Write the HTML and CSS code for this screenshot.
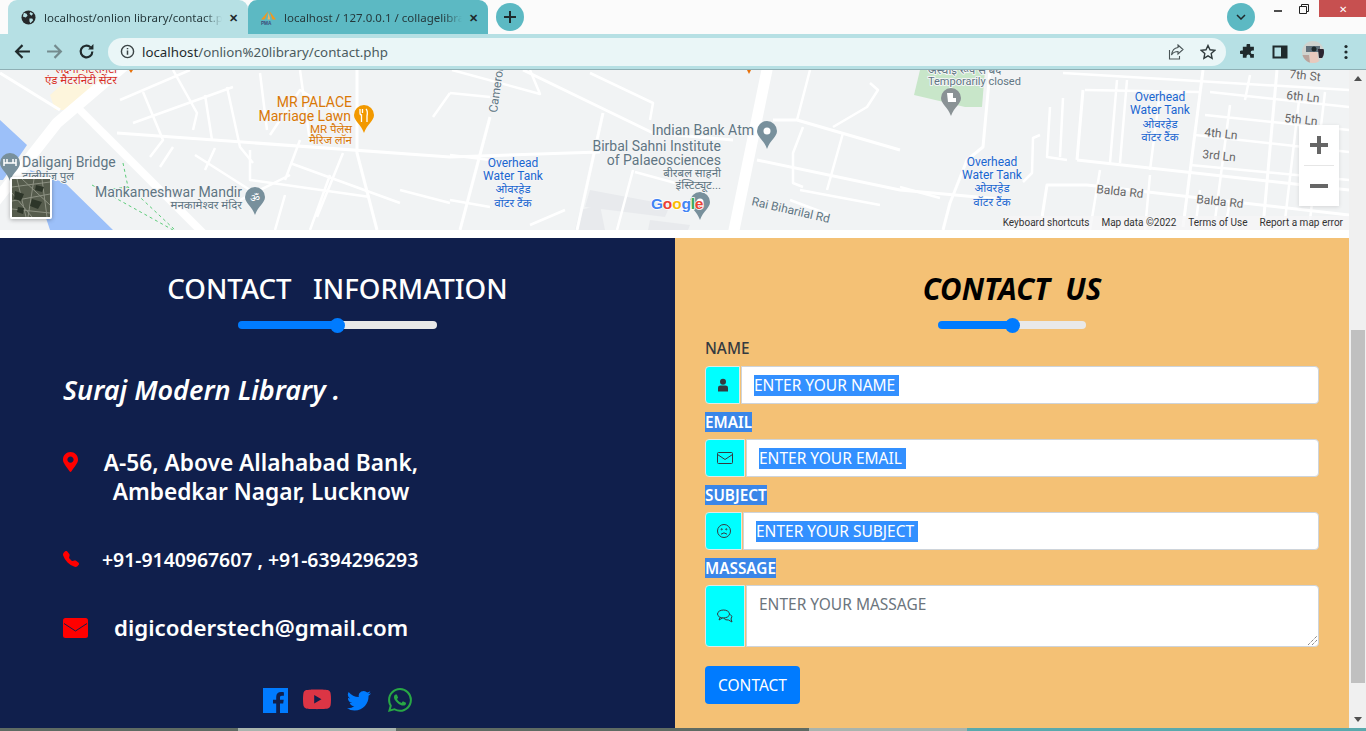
FILE: index.html
```html
<!DOCTYPE html>
<html lang="en">
<head>
<meta charset="utf-8">
<title>Contact</title>
<link rel="stylesheet" href="styles.css">
</head>
<body>
<header class="chrome">
  <div class="tabstrip">
    <div class="tab tab-active">
      <svg class="favicon" viewBox="0 0 16 16"><circle cx="8" cy="8" r="7.500" fill="#26292b"/><path d="M3 3l3 1 1 2-2 2-3-1zM9 9l3 0 1 2-3 3-1-2zM10 2l3 2-2 2-2-2z" fill="#b6e0e4"/></svg>
      <span class="tab-title">localhost/onlion library/contact.php</span>
      <span class="tab-x">✕</span>
    </div>
    <div class="tab tab-other">
      <svg class="favicon" viewBox="0 0 18 16"><path d="M9 1L5 10H1zM10 1l3 9h4z" fill="#f0981e"/><path d="M9 3l-1 7h3z" fill="#f7b45a"/><text x="1" y="15.500" class="pma">PMA</text></svg>
      <span class="tab-title">localhost / 127.0.0.1 / collagelibrary</span>
      <span class="tab-x">✕</span>
    </div>
    <div class="newtab"><svg viewBox="0 0 12 12"><path d="M6 0v12M0 6h12" stroke="#1f2a2c" stroke-width="2"/></svg></div>
    <div class="strip-fill"></div>
    <div class="tabsearch"><svg viewBox="0 0 10 6"><path d="M1 1l4 4 4-4" fill="none" stroke="#1f2a2c" stroke-width="1.500"/></svg></div>
    <div class="winctl">
      <span class="win-btn"><svg viewBox="0 0 10 10" width="10" height="10"><path d="M1 7h8" stroke="#222" stroke-width="1.600"/></svg></span>
      <span class="win-btn win-restore"><svg viewBox="0 0 10 10" width="10" height="10"><path d="M2.500 2.500V.5h7v7h-2M.5 2.500h7v7h-7z" fill="none" stroke="#222"/></svg></span>
      <span class="win-btn win-close">✕</span>
    </div>
  </div>
  <div class="toolbar">
    <svg class="tool" viewBox="0 0 16 16"><path d="M15 8H2M8 2L2 8l6 6" fill="none" stroke="#1f2a2c" stroke-width="2"/></svg>
    <svg class="tool" viewBox="0 0 16 16"><path d="M1 8h13M8 2l6 6-6 6" fill="none" stroke="#748b8e" stroke-width="2"/></svg>
    <svg class="tool tool-last" viewBox="0 0 16 16"><path d="M13.500 8a5.500 5.500 0 1 1-1.700-4" fill="none" stroke="#1f2a2c" stroke-width="2"/><path d="M14.500 1v5h-5z" fill="#1f2a2c"/></svg>
    <div class="omnibox">
      <svg class="info" viewBox="0 0 16 16"><circle cx="8" cy="8" r="6.500" fill="none" stroke="#3b4446" stroke-width="1.500"/><path d="M8 7v4.500M8 4.200v1.500" stroke="#3b4446" stroke-width="1.600"/></svg>
      <span class="url"><b>localhost</b>/onlion%20library/contact.php</span>
      <svg class="omni-icon" viewBox="0 0 16 16"><path d="M10 1l5 4.500-5 4.500V7.500C7 7.500 5 8.500 3.500 11 4 7 6 4 10 3.500zM1.500 6v9h10v-3" fill="none" stroke="#4a5557" stroke-width="1.100"/></svg>
      <svg class="omni-icon" viewBox="0 0 16 16"><path d="M8 1.500l2 4.300 4.700.6-3.500 3.200.9 4.700L8 11.900l-4.100 2.400.9-4.700L1.300 6.400 6 5.800z" fill="none" stroke="#2f3a3c" stroke-width="1.400"/></svg>
    </div>
    <svg class="ext" viewBox="0 0 16 16"><path d="M6 1.500a2 2 0 0 1 4 0V3h4v4h-1.500a2 2 0 0 0 0 4H14v4h-4v-1.500a2 2 0 0 0-4 0V15H2v-4H.5a2 2 0 0 1 0-4H2V3h4z" fill="#1f2a2c" transform="translate(1 0) scale(.92)"/></svg>
    <svg class="ext ext-panel" viewBox="0 0 16 16"><path d="M1.500 2.500h13v11h-13z" fill="none" stroke="#1f2a2c" stroke-width="2"/><path d="M9 2.500h5v11H9z" fill="#1f2a2c"/></svg>
    <svg class="avatar" viewBox="0 0 22 22"><rect width="22" height="22" fill="#cfd3cf"/><path d="M4 5h14v6H4z" fill="#5f6f7a"/><path d="M8 11h7l2 11H7z" fill="#e8c9bd"/><path d="M16 8h6v9h-5z" fill="#2a2530"/><path d="M0 14h7l1 8H3z" fill="#b8a39c"/><circle cx="12" cy="8" r="2.500" fill="#1f2a2c"/></svg>
    <svg class="dots" viewBox="0 0 4 16"><circle cx="2" cy="2.500" r="1.600"/><circle cx="2" cy="8" r="1.600"/><circle cx="2" cy="13.500" r="1.600"/></svg>
  </div>
</header>

<div class="viewport">
  <main class="page">
    <section class="map">
      <svg class="map-art" viewBox="0 0 1349 160" width="1349" height="160">
        <path class="water" d="M0 50L27 75 3 110H0zM30 100L65 113 113 160H50z"/>
        <path class="beige" d="M50 25L78 0H125L80 40 55 40z"/>
        <path class="park" d="M914 25L920 0H985L982 37 965 37z"/>
        <path class="bldg" d="M590 120L670 135 665 147 585 137zM580 140L600 135 605 160H575zM650 150L690 155 688 160H648z"/>
        <g class="r-big">
          <path d="M-5 132L57 53 125-5"/>
          <path d="M768-5L733 165"/>
          <path class="r-wide" d="M77 37L205 165"/>
        </g>
        <g class="r-mid">
          <path d="M0 3L60 40"/>
          <path d="M117 63L450 87 600 82"/>
          <path d="M523 0L653 63 733 70"/>
          <path d="M603 43L577 160"/>
          <path d="M490 47L460 160"/>
          <path d="M773 50L797 50 900 80"/>
          <path d="M757 90L900 120 1010 130"/>
          <path d="M990 0L983 77 967 90 950 133 943 160"/>
          <path d="M1077 90L1349 120"/>
          <path d="M1040 160L1047 115 1087 115 1349 145"/>
          <path d="M1203 0L1183 157"/>
          <path d="M1277 0L1263 157"/>
          <path d="M1083 20L1077 90"/>
          <path d="M357 0L357 83 370 133 377 160"/>
        </g>
        <g class="r-sm">
          <path d="M143 22L163 70 150 87M173 0L197 43 193 60M227 17L240 77 253 93M133 53L233 17M260 3L267 60M120 30L190 0M205 25L212 70M300 0L310 72"/>
          <path d="M173 77L160 97M195 85L250 120M250 80L250 110 370 127M215 78L205 100M290 93L400 133M343 83L317 147M400 120L450 133M450 23L433 47M240 130L290 105M270 65L300 20 350 50M285 125L275 160M330 105L310 160M300 70L285 110"/>
          <path d="M450 23L490 27M450 85L490 90M450 130L490 137M530 155L565 140M452 0L540 24 530 0M590 3L653 33 650 50"/>
          <path d="M633 100L617 160M635 102L690 117M810 0L797 50M833 57L867 37 878 20 870 13M803 57L793 83 793 113 803 117M843 63L827 120M800 120L880 135M790 130L830 145"/>
          <path d="M1040 65L1033 68 1032 103 1023 112M1063 28L1060 87M1050 37L1047 87 1067 90M900 117L940 128"/>
          <path d="M1063 3L1349 20M1085 20L1200 22M1117 10L1110 93M1127 10L1120 93M1160 22L1150 100M1210 22L1349 37M1205 45L1349 60M1195 65L1349 82M1190 95L1349 110M1230 35L1215 150M1300 22L1285 150M1325 22L1310 150M1250 5L1245 30"/>
          <path d="M1100 100L1090 160M1150 105L1145 160M1200 120L1195 160M1230 130L1225 160"/>
        </g>
        <g class="trail"><path d="M92 115L173 160M123 93L128 117 143 130 175 160M128 117L105 120"/></g>

        <g class="pin pin-grey" transform="translate(10 100)"><path d="M0 -17a10 10 0 0 1 10 10c0 6-7 9-10 18-3-9-10-12-10-18a10 10 0 0 1 10-10z"/><path d="M-6-11v7M6-11v7M-6-7h12M-3-11v4M3-11v4" stroke="#fff" stroke-width="1.500"/></g>
        <g class="pin pin-grey" transform="translate(255 134)"><path d="M0 -17a10 10 0 0 1 10 10c0 6-7 9-10 18-3-9-10-12-10-18a10 10 0 0 1 10-10z"/><text x="0" y="-2" class="glyph">ॐ</text></g>
        <g class="pin pin-grey" transform="translate(767 66)"><path d="M0 -15a10 10 0 0 1 10 10c0 6-7 9-10 18-3-9-10-12-10-18a10 10 0 0 1 10-10z"/><circle cy="-5" r="3.500" fill="#fff"/></g>
        <g class="pin pin-grey" transform="translate(700 135)"><path d="M0 -13a10 10 0 0 1 10 10c0 6-7 9-10 18-3-9-10-12-10-18a10 10 0 0 1 10-10z"/><circle cy="-3" r="3.500" fill="#fff"/></g>
        <g class="pin pin-dgrey" transform="translate(951 29)"><path d="M0 -11a10 10 0 0 1 10 10c0 6-7 9-10 18-3-9-10-12-10-18a10 10 0 0 1 10-10z"/><path d="M-4-6h6v5h3v4h-8z" fill="#fff"/></g>
        <g class="pin pin-orange" transform="translate(364 47)"><path d="M0 -12a10 10 0 0 1 10 10c0 6-7 9-10 18-3-9-10-12-10-18a10 10 0 0 1 10-10z"/><path d="M-4-8v4q0 2 1.500 2v7M-1.500-8v4M2-8q2 2 1 7v6" stroke="#fff" stroke-width="1.300" fill="none"/></g>
        <path class="marker" d="M129 0l2 3 2-3zM747 0l2 4 2-4z"/>

        <text class="lb lb-r xs" x="117" y="3" text-anchor="end">लक्ष्मी मेटरनिटी</text>
        <text class="lb lb-r xs" x="117" y="14" text-anchor="end">एंड मैटरनिटी सेंटर</text>
        <text class="lb lb-o md" x="352" y="37" text-anchor="end">MR PALACE</text>
        <text class="lb lb-o md" x="351" y="51" text-anchor="end">Marriage Lawn</text>
        <text class="lb lb-o xs" x="352" y="63" text-anchor="end">MR पैलेस</text>
        <text class="lb lb-o xs" x="352" y="74" text-anchor="end">मैरिज लॉन</text>
        <text class="lb lb-g md" x="22" y="97">Daliganj Bridge</text>
        <text class="lb lb-g xs" x="22" y="110">डालीगंज पुल</text>
        <text class="lb lb-g lg" x="242" y="127" text-anchor="end">Mankameshwar Mandir</text>
        <text class="lb lb-g xs" x="242" y="139" text-anchor="end">मनकामेश्वर मंदिर</text>
        <text class="lb lb-g sm" x="497" y="43" transform="rotate(-82 497 43)">Cameron</text>
        <text class="lb lb-g md" x="754" y="65" text-anchor="end">Indian Bank Atm</text>
        <text class="lb lb-g md" x="721" y="81" text-anchor="end">Birbal Sahni Institute</text>
        <text class="lb lb-g md" x="721" y="95" text-anchor="end">of Palaeosciences</text>
        <text class="lb lb-g xs" x="721" y="107" text-anchor="end">बीरबल साहनी</text>
        <text class="lb lb-g xs" x="721" y="119" text-anchor="end">इंस्टिट्यूट...</text>
        <text class="lb lb-b sm" x="513" y="97" text-anchor="middle">Overhead</text>
        <text class="lb lb-b sm" x="513" y="110" text-anchor="middle">Water Tank</text>
        <text class="lb lb-b xs" x="513" y="123" text-anchor="middle">ओवरहेड</text>
        <text class="lb lb-b xs" x="513" y="137" text-anchor="middle">वॉटर टैंक</text>
        <text class="lb lb-b sm" x="992" y="96" text-anchor="middle">Overhead</text>
        <text class="lb lb-b sm" x="992" y="109" text-anchor="middle">Water Tank</text>
        <text class="lb lb-b xs" x="992" y="122" text-anchor="middle">ओवरहेड</text>
        <text class="lb lb-b xs" x="992" y="136" text-anchor="middle">वॉटर टैंक</text>
        <text class="lb lb-b sm" x="1160" y="31" text-anchor="middle">Overhead</text>
        <text class="lb lb-b sm" x="1160" y="44" text-anchor="middle">Water Tank</text>
        <text class="lb lb-b xs" x="1160" y="58" text-anchor="middle">ओवरहेड</text>
        <text class="lb lb-b xs" x="1160" y="71" text-anchor="middle">वॉटर टैंक</text>
        <text class="lb lb-g xs" x="928" y="4">अस्थाई रूप से बंद</text>
        <text class="lb lb-g tc" x="928" y="15">Temporarily closed</text>
        <text class="lb lb-g sm" x="751" y="135" transform="rotate(13 751 135)">Rai Biharilal Rd</text>
        <text class="lb lb-d sm" x="1289" y="8" transform="rotate(6 1289 8)">7th St</text>
        <text class="lb lb-d sm" x="1286" y="29" transform="rotate(6 1286 29)">6th Ln</text>
        <text class="lb lb-d sm" x="1284" y="52" transform="rotate(6 1284 52)">5th Ln</text>
        <text class="lb lb-d sm" x="1204" y="66" transform="rotate(6 1204 66)">4th Ln</text>
        <text class="lb lb-d sm" x="1202" y="88" transform="rotate(6 1202 88)">3rd Ln</text>
        <text class="lb lb-d sm" x="1096" y="123" transform="rotate(6 1096 123)">Balda Rd</text>
        <text class="lb lb-d sm" x="1196" y="133" transform="rotate(6 1196 133)">Balda Rd</text>
        <text class="logo" x="651" y="139"><tspan fill="#4285f4">G</tspan><tspan fill="#ea4335">o</tspan><tspan fill="#fbbc05">o</tspan><tspan fill="#4285f4">g</tspan><tspan fill="#34a853">l</tspan><tspan fill="#ea4335">e</tspan></text>
      </svg>
      <div class="sat">
        <svg viewBox="0 0 38 38" width="38" height="38"><rect width="38" height="38" fill="#565c4d"/><path d="M0 8L38 3M5 0L14 38M22 0L16 38M0 22L38 15M0 30L38 34M30 0L35 38M0 14L20 38M10 0L38 26" stroke="#8d9183" stroke-width="1"/><path d="M3 12l9 3-3 7-7-2zM20 20l10 3-4 7-8-3zM24 6l8 2-2 5-7-2zM6 28l6 1-1 6-6-2z" fill="#2d3529"/></svg>
      </div>
      <div class="zoom">
        <button class="zoom-btn" type="button"><svg viewBox="0 0 18 18" width="18" height="18"><path d="M9 0v18M0 9h18" stroke="#666" stroke-width="4"/></svg></button>
        <span class="zoom-sep"></span>
        <button class="zoom-btn" type="button"><svg viewBox="0 0 18 18" width="18" height="18"><path d="M0 9h18" stroke="#666" stroke-width="4"/></svg></button>
      </div>
      <div class="attrib">
        <span>Keyboard shortcuts</span><span>Map data ©2022</span><span>Terms of Use</span><span>Report a map error</span>
      </div>
    </section>

    <section class="contact">
      <div class="info-col">
        <h2 class="col-title">CONTACT &nbsp; INFORMATION</h2>
        <input class="range range-l" type="range" value="50" aria-label="range">
        <h3 class="org">Suraj Modern Library .</h3>
        <div class="line line-addr">
          <svg class="ico-pin" viewBox="0 0 384 512"><path d="M172.268 501.67C26.97 291.031 0 269.413 0 192 0 85.961 85.961 0 192 0s192 85.961 192 192c0 77.413-26.97 99.031-172.268 309.67-9.535 13.774-29.93 13.773-39.464 0zM192 272c44.183 0 80-35.817 80-80s-35.817-80-80-80-80 35.817-80 80 35.817 80 80 80z"/></svg>
          <p class="addr">A-56, Above Allahabad Bank,<br>Ambedkar Nagar, Lucknow</p>
        </div>
        <div class="line line-phone">
          <svg class="ico-phone" viewBox="0 0 16 16"><path d="M1.885.511a1.745 1.745 0 0 1 2.61.163L6.29 2.98c.329.423.445.974.315 1.494l-.547 2.19a.678.678 0 0 0 .178.643l2.457 2.457a.678.678 0 0 0 .644.178l2.189-.547a1.745 1.745 0 0 1 1.494.315l2.306 1.794c.829.645.905 1.87.163 2.611l-1.034 1.034c-.74.74-1.846 1.065-2.877.702a18.634 18.634 0 0 1-7.01-4.42 18.634 18.634 0 0 1-4.42-7.009c-.362-1.03-.037-2.137.703-2.877L1.885.511z"/></svg>
          <p class="phone">+91-9140967607 , +91-6394296293</p>
        </div>
        <div class="line line-mail">
          <svg class="ico-mail" viewBox="0 0 25 20"><rect width="25" height="20" rx="2.500"/><path d="M1 5.500L12.500 13 24 5.500" fill="none" stroke="#101f4c" stroke-width="1"/></svg>
          <p class="mail">digicoderstech@gmail.com</p>
        </div>
        <div class="socials">
          <svg class="soc soc-fb" viewBox="0 0 25 25"><rect width="25" height="25" fill="#007bff"/><path d="M17 25v-9.500h3.200l.5-3.700H17V9.500c0-1.100.4-1.800 1.900-1.800h2V4.300c-.4 0-1.500-.2-2.900-.2-2.900 0-4.800 1.700-4.800 5v2.700H10v3.700h3.200V25z" fill="#101f4c"/></svg>
          <svg class="soc soc-yt" viewBox="0 0 16 16"><path d="M8.051 1.999h.089c.822.003 4.987.033 6.11.335a2.01 2.01 0 0 1 1.415 1.42c.101.38.172.883.22 1.402l.01.104.022.26.008.104c.065.914.073 1.77.074 1.957v.075c-.001.194-.01 1.108-.082 2.06l-.008.105-.009.104c-.05.572-.124 1.14-.235 1.558a2.007 2.007 0 0 1-1.415 1.42c-1.16.312-5.569.334-6.18.335h-.142c-.309 0-1.587-.006-2.927-.052l-.17-.006-.087-.004-.171-.007-.171-.007c-1.11-.049-2.167-.128-2.654-.26a2.007 2.007 0 0 1-1.415-1.419c-.111-.417-.185-.986-.235-1.558L.09 9.82l-.008-.104A31.4 31.4 0 0 1 0 7.68v-.123c.002-.215.01-.958.064-1.778l.007-.103.003-.052.008-.104.022-.26.01-.104c.048-.519.119-1.023.22-1.402a2.007 2.007 0 0 1 1.415-1.42c.487-.13 1.544-.21 2.654-.26l.17-.007.172-.006.086-.003.171-.007A99.788 99.788 0 0 1 7.858 2h.193zM6.4 5.209v4.818l4.157-2.408L6.4 5.209z"/></svg>
          <svg class="soc soc-tw" viewBox="0 0 16 16"><path d="M5.026 15c6.038 0 9.341-5.003 9.341-9.334 0-.14 0-.282-.006-.422A6.685 6.685 0 0 0 16 3.542a6.658 6.658 0 0 1-1.889.518 3.301 3.301 0 0 0 1.447-1.817 6.533 6.533 0 0 1-2.087.793A3.286 3.286 0 0 0 7.875 6.03a9.325 9.325 0 0 1-6.767-3.429 3.289 3.289 0 0 0 1.018 4.382A3.323 3.323 0 0 1 .64 6.575v.045a3.288 3.288 0 0 0 2.632 3.218 3.203 3.203 0 0 1-.865.115 3.23 3.23 0 0 1-.614-.057 3.283 3.283 0 0 0 3.067 2.277A6.588 6.588 0 0 1 .78 13.58a6.32 6.32 0 0 1-.78-.045A9.344 9.344 0 0 0 5.026 15z"/></svg>
          <svg class="soc soc-wa" viewBox="0 0 16 16"><path d="M13.601 2.326A7.854 7.854 0 0 0 7.994 0C3.627 0 .068 3.558.064 7.926c0 1.399.366 2.76 1.057 3.965L0 16l4.204-1.102a7.933 7.933 0 0 0 3.79.965h.004c4.368 0 7.926-3.558 7.93-7.93A7.898 7.898 0 0 0 13.6 2.326zM7.994 14.521a6.573 6.573 0 0 1-3.356-.92l-.24-.144-2.494.654.666-2.433-.156-.251a6.56 6.56 0 0 1-1.007-3.505c0-3.626 2.957-6.584 6.591-6.584a6.56 6.56 0 0 1 4.66 1.931 6.557 6.557 0 0 1 1.928 4.66c-.004 3.639-2.961 6.592-6.592 6.592zm3.615-4.934c-.197-.099-1.17-.578-1.353-.646-.182-.065-.315-.099-.445.099-.133.197-.513.646-.627.775-.114.133-.232.148-.43.05-.197-.1-.836-.308-1.592-.985-.59-.525-.985-1.175-1.103-1.372-.114-.198-.011-.304.088-.403.087-.088.197-.232.296-.346.1-.114.133-.198.198-.33.065-.134.034-.248-.015-.347-.05-.099-.445-1.076-.612-1.47-.16-.389-.323-.335-.445-.34-.114-.007-.247-.007-.38-.007a.729.729 0 0 0-.529.247c-.182.198-.691.677-.691 1.654 0 .977.71 1.916.81 2.049.098.133 1.394 2.132 3.383 2.992.47.205.84.326 1.129.418.475.152.904.129 1.246.08.38-.058 1.171-.48 1.338-.943.164-.464.164-.86.114-.943-.049-.084-.182-.133-.38-.232z"/></svg>
        </div>
      </div>

      <form class="form-col">
        <h2 class="form-title">CONTACT &nbsp;US</h2>
        <input class="range range-r" type="range" value="50" aria-label="range">
        <div class="label label-plain">NAME</div>
        <div class="group">
          <span class="addon addon-name"><svg class="ai" viewBox="0 0 14 14"><circle cx="7" cy="3.800" r="3"/><path d="M2 13.500V9.500Q2 7.500 4.500 7.500h5Q12 7.500 12 9.500v4z"/></svg></span>
          <div class="field"><span class="sel">ENTER YOUR NAME </span></div>
        </div>
        <div class="label"><span class="hl">EMAIL</span></div>
        <div class="group">
          <span class="addon addon-email"><svg class="ai ai-line" viewBox="0 0 16 14"><rect x=".5" y="1.500" width="15" height="11" rx="1"/><path d="M.5 3.500L8 8.500l7.500-5"/></svg></span>
          <div class="field"><span class="sel">ENTER YOUR EMAIL </span></div>
        </div>
        <div class="label"><span class="hl">SUBJECT</span></div>
        <div class="group">
          <span class="addon addon-subject"><svg class="ai ai-line" viewBox="0 0 14 14"><circle cx="7" cy="7" r="6.500"/><circle cx="4.700" cy="5.300" r=".6"/><circle cx="9.300" cy="5.300" r=".6"/><path d="M4 10.200Q7 7.500 10 10.200"/></svg></span>
          <div class="field"><span class="sel">ENTER YOUR SUBJECT </span></div>
        </div>
        <div class="label"><span class="hl">MASSAGE</span></div>
        <div class="group group-area">
          <span class="addon addon-email"><svg class="ai ai-line" viewBox="0 0 16 14"><ellipse cx="6.500" cy="5" rx="6" ry="4"/><path d="M3 8.500L2 11l3.500-2M13.500 5.500Q16 7.500 14 10l1 3-3.500-2Q8.500 11.500 6.500 9"/></svg></span>
          <div class="field field-area"><span class="ph">ENTER YOUR MASSAGE</span>
            <svg class="grip" viewBox="0 0 9 9" width="9" height="9"><path d="M0 9L9 0M4 9L9 4" stroke="#555" stroke-dasharray="1 1"/></svg>
          </div>
        </div>
        <button class="btn" type="button">CONTACT</button>
      </form>
    </section>
  </main>
  <aside class="scrollbar">
    <span class="sb-arrow"><svg viewBox="0 0 8 5" width="8" height="5"><path d="M4 0l4 5H0z" fill="#505050"/></svg></span>
    <div class="sb-track"><div class="sb-thumb"></div></div>
    <span class="sb-arrow"><svg viewBox="0 0 8 5" width="8" height="5"><path d="M0 0h8L4 5z" fill="#505050"/></svg></span>
  </aside>
</div>
<footer class="taskbar">
  <span class="tb tb-a"></span><span class="tb tb-b"></span><span class="tb tb-a2"></span><span class="tb tb-b"></span><span class="tb tb-c"></span>
</footer>
</body>
</html>
```

FILE: styles.css
```css
* { box-sizing: border-box; }
html, body { margin: 0; height: 100%; overflow: hidden; }
body { width: 1366px; height: 731px; display: flex; flex-direction: column; font-family: "Noto Sans", "Open Sans", "Noto Sans CJK SC", sans-serif; background: #fff; }
p, h2, h3 { margin: 0; }

/* browser chrome */
.chrome { flex: none; height: 70px; display: flex; flex-direction: column; border-bottom: 1px solid #8fb0b5; }
.tabstrip { height: 34px; background: #fbfbfb; display: flex; align-items: flex-end; padding-left: 8px; }
.tab { width: 240px; height: 34px; border-radius: 9px 9px 0 0; display: flex; align-items: center; padding: 0 10px 0 12px; gap: 7px; font-size: 11.500px; color: #25393c; }
.tab-active { background: #b6e0e4; }
.tab-other { background: #5cb9c3; }
.favicon { width: 17px; height: 15px; flex: none; }
.pma { font: bold 5px "Liberation Sans", sans-serif; fill: #3a4a78; }
.tab-title { flex: 1; white-space: nowrap; overflow: hidden; -webkit-mask-image: linear-gradient(90deg, #000 90%, transparent); mask-image: linear-gradient(90deg, #000 90%, transparent); }
.tab-x { font-size: 11px; font-weight: 700; color: #1f2a2c; }
.newtab { width: 28px; height: 28px; margin: 0 0 3px 8px; border-radius: 50%; background: #5cb9c3; display: flex; align-items: center; justify-content: center; }
.newtab svg { width: 12px; height: 12px; }
.strip-fill { flex: 1; }
.tabsearch { width: 28px; height: 28px; margin: 0 10px 3px 0; border-radius: 50%; background: #5cb9c3; display: flex; align-items: center; justify-content: center; }
.tabsearch svg { width: 10px; height: 6px; }
.winctl { display: flex; align-self: flex-start; }
.win-btn { width: 26px; height: 16px; display: flex; align-items: center; justify-content: center; margin-top: 1px; }
.win-restore { margin-right: 2px; }
.win-btn.win-close { width: 47px; height: 17px; margin-top: 0; background: #c75050; color: #fff; font-size: 10px; }
.toolbar { flex: 1; background: #b6e0e4; display: flex; align-items: center; padding: 0 13px 0 14px; }
.tool { width: 17px; height: 17px; margin-right: 15px; flex: none; }
.tool-last { margin-right: 13px; }
.omnibox { width: 1118px; height: 28px; border-radius: 14px; background: #eaf6f7; display: flex; align-items: center; padding: 0 10px 0 12px; flex: none; }
.info { width: 15px; height: 15px; margin-right: 7px; }
.url { flex: 1; font-size: 13.300px; color: #4b5b5e; }
.url b { font-weight: 400; color: #1e2a2c; }
.omni-icon { width: 16px; height: 16px; margin-left: 16px; }
.ext { width: 16px; height: 16px; margin-left: 14px; flex: none; }
.ext-panel { margin-left: 16px; }
.avatar { width: 22px; height: 22px; margin-left: 14px; flex: none; border-radius: 50%; }
.dots { width: 4px; height: 16px; margin-left: 20px; fill: #1f2a2c; flex: none; }

/* page */
.viewport { flex: 1; min-height: 0; display: flex; }
.page { width: 1349px; display: flex; flex-direction: column; background: #fff; }
.map { height: 160px; margin-bottom: 8px; position: relative; overflow: hidden; background: #f1f3f4; flex: none; }
.map-art { display: block; }
.water { fill: #9cc0f9; }
.beige { fill: #fdf5dc; }
.park { fill: #c8e6c9; }
.bldg { fill: #e8eaed; }
.r-big path, .r-mid path, .r-sm path { fill: none; stroke: #fff; stroke-linejoin: round; }
.r-big path { stroke-width: 11; }
.r-big .r-wide { stroke-width: 8; }
.r-mid path { stroke-width: 3; }
.r-sm path { stroke-width: 2.500; }
.trail path { fill: none; stroke: #5dcc7a; stroke-width: 1; stroke-dasharray: 3 3; }
.pin-grey path:first-child { fill: #78909c; }
.pin-dgrey path:first-child { fill: #8a9295; }
.pin-orange path:first-child { fill: #f29900; }
.glyph { font: 11px "Noto Sans", sans-serif; fill: #fff; text-anchor: middle; }
.marker { fill: #e8710a; }
.lb { font-family: Roboto, "Noto Sans", sans-serif; paint-order: stroke; stroke: #f4f5f6; stroke-width: 2px; stroke-linejoin: round; }
.lg { font-size: 14px; }
.md { font-size: 14px; }
.sm { font-size: 12px; }
.tc { font-size: 11px; }
.xs { font-size: 11.500px; }
.lb-r { fill: #d93025; }
.lb-o { fill: #d97806; }
.lb-g { fill: #5f7583; }
.lb-b { fill: #1a66d0; }
.lb-d { fill: #666; }
.logo { font: 700 15.500px "Liberation Sans", sans-serif; letter-spacing: -.2px; paint-order: stroke; stroke: #fff; stroke-width: 1.500px; }
.sat { position: absolute; left: 10px; top: 107px; width: 42px; height: 42px; border: 2px solid #fff; border-radius: 2px; box-shadow: 0 1px 4px rgba(0,0,0,.3); }
.sat svg { display: block; }
.zoom { position: absolute; left: 1299px; top: 55px; width: 40px; height: 81px; background: #fff; box-shadow: 0 1px 4px rgba(0,0,0,.12); display: flex; flex-direction: column; align-items: center; }
.zoom-btn { flex: 1; width: 40px; padding: 0; border: 0; background: none; display: flex; align-items: center; justify-content: center; }
.zoom-sep { width: 30px; height: 1px; background: #e6e6e6; flex: none; }
.attrib { position: absolute; right: 0; bottom: 0; height: 14px; padding-right: 6px; display: flex; gap: 12px; font: 10px/14px Roboto, sans-serif; color: #333; background: rgba(245,246,247,.75); }

.contact { flex: 1; min-height: 0; display: grid; grid-template-columns: 675px 674px; }
.info-col { background: #101f4c; color: #fff; display: flex; flex-direction: column; }
.col-title { margin-top: 32px; height: 36px; font-size: 27.600px; line-height: 36px; font-weight: 500; text-align: center; white-space: pre; }
.range { -webkit-appearance: none; appearance: none; display: block; height: 8px; margin: 0 auto; padding: 0; border-radius: 4px; background: linear-gradient(90deg, #007bff 50%, #e9e9e9 50%); outline: 0; }
.range::-webkit-slider-runnable-track { height: 8px; }
.range::-webkit-slider-thumb { -webkit-appearance: none; width: 15px; height: 15px; margin-top: -3.500px; border-radius: 50%; background: #007bff; }
.range-l { width: 199px; margin-top: 15px; }
.range-r { width: 148px; margin-top: 14px; }
.org { margin: 43px 0 0 63px; font-size: 27px; line-height: 36px; font-style: italic; font-weight: 600; white-space: nowrap; }
.line { display: flex; align-items: center; padding-left: 63px; }
.line-addr { margin-top: 40px; align-items: flex-start; }
.ico-pin { width: 15px; height: 20px; margin-top: 4px; fill: #ff0000; flex: none; }
.addr { width: 316px; margin-left: 25px; font-size: 22.700px; line-height: 29px; font-weight: 600; text-align: center; white-space: nowrap; }
.line-phone { margin-top: 39px; height: 29px; }
.ico-phone { width: 16px; height: 16px; margin-top: -2px; fill: #ff0000; flex: none; }
.phone { margin-left: 23px; font-size: 19.400px; line-height: 29px; font-weight: 600; white-space: nowrap; }
.line-mail { margin-top: 39px; height: 29px; }
.ico-mail { width: 25px; height: 20px; fill: #ff0000; flex: none; }
.mail { margin-left: 26px; font-size: 22.300px; line-height: 29px; font-weight: 600; white-space: nowrap; }
.socials { margin: 44px 0 0 263px; display: flex; align-items: center; }
.soc { display: block; flex: none; }
.soc-fb { width: 25px; height: 25px; }
.soc-yt { width: 28px; height: 28px; margin-left: 15px; fill: #dc3545; }
.soc-tw { width: 24px; height: 24px; margin-left: 16px; fill: #007bff; }
.soc-wa { width: 24px; height: 24px; margin-left: 17px; fill: #28a745; }

.form-col { background: #f4c175; padding: 0 30px; display: flex; flex-direction: column; }
.form-title { margin-top: 33px; height: 36px; font-size: 29.500px; line-height: 36px; font-style: italic; font-weight: 700; color: #000; text-align: center; white-space: pre; }
.label { height: 20px; margin: 8px 0 7px; font-size: 15.300px; line-height: 20px; font-weight: 600; color: #fff; white-space: nowrap; }
.label-plain { margin: 9px 0 8px; font-weight: 500; color: #343a40; }
.hl { display: inline-block; background: #3a86e8; }
.group { display: flex; height: 38px; gap: 1px; }
.group-area { height: 62px; }
.addon { flex: none; display: flex; align-items: center; justify-content: center; background: #00ffff; border: 1px solid #dfe9e6; border-radius: 4px 0 0 4px; }
.addon-name { width: 35px; }
.addon-email { width: 40px; }
.addon-subject { width: 37px; }
.ai { width: 14px; height: 14px; fill: #343a40; }
.addon-email .ai { width: 16px; }
.ai-line { fill: none; stroke: #343a40; stroke-width: 1; }
.field { flex: 1; background: #fff; border: 1px solid #ced4da; border-radius: 0 4px 4px 0; padding: 0 12px; display: flex; align-items: center; font-size: 15.500px; color: #fff; position: relative; }
.field-area { align-items: flex-start; padding-top: 8px; }
.sel { background: #3390ff; line-height: 21px; white-space: pre; }
.ph { color: #6c757d; line-height: 21px; }
.grip { position: absolute; right: 1px; bottom: 1px; }
.btn { align-self: flex-start; width: 95px; height: 38px; margin-top: 19px; padding: 0; border: 0; border-radius: 4px; background: #007bff; color: #fff; font: 15.500px "Noto Sans", sans-serif; }

.scrollbar { width: 17px; background: #f0f0f0; display: flex; flex-direction: column; align-items: center; }
.sb-arrow { height: 17px; flex: none; display: flex; align-items: center; justify-content: center; }
.sb-track { flex: 1; width: 100%; padding-top: 243px; padding-bottom: 28px; display: flex; }
.sb-thumb { flex: 1; margin: 0 1px 0 2px; background: #c0c0c0; }
.taskbar { flex: none; height: 3px; display: flex; background: #5aa9ad; }
.tb { display: block; height: 3px; }
.tb-a { width: 238px; background: #5f6b63; }
.tb-b { width: 158px; background: #a9b4ae; }
.tb-a2 { width: 413px; background: #5f6b63; }
.tb-c { flex: 1; background: #5aa9ad; }
```
